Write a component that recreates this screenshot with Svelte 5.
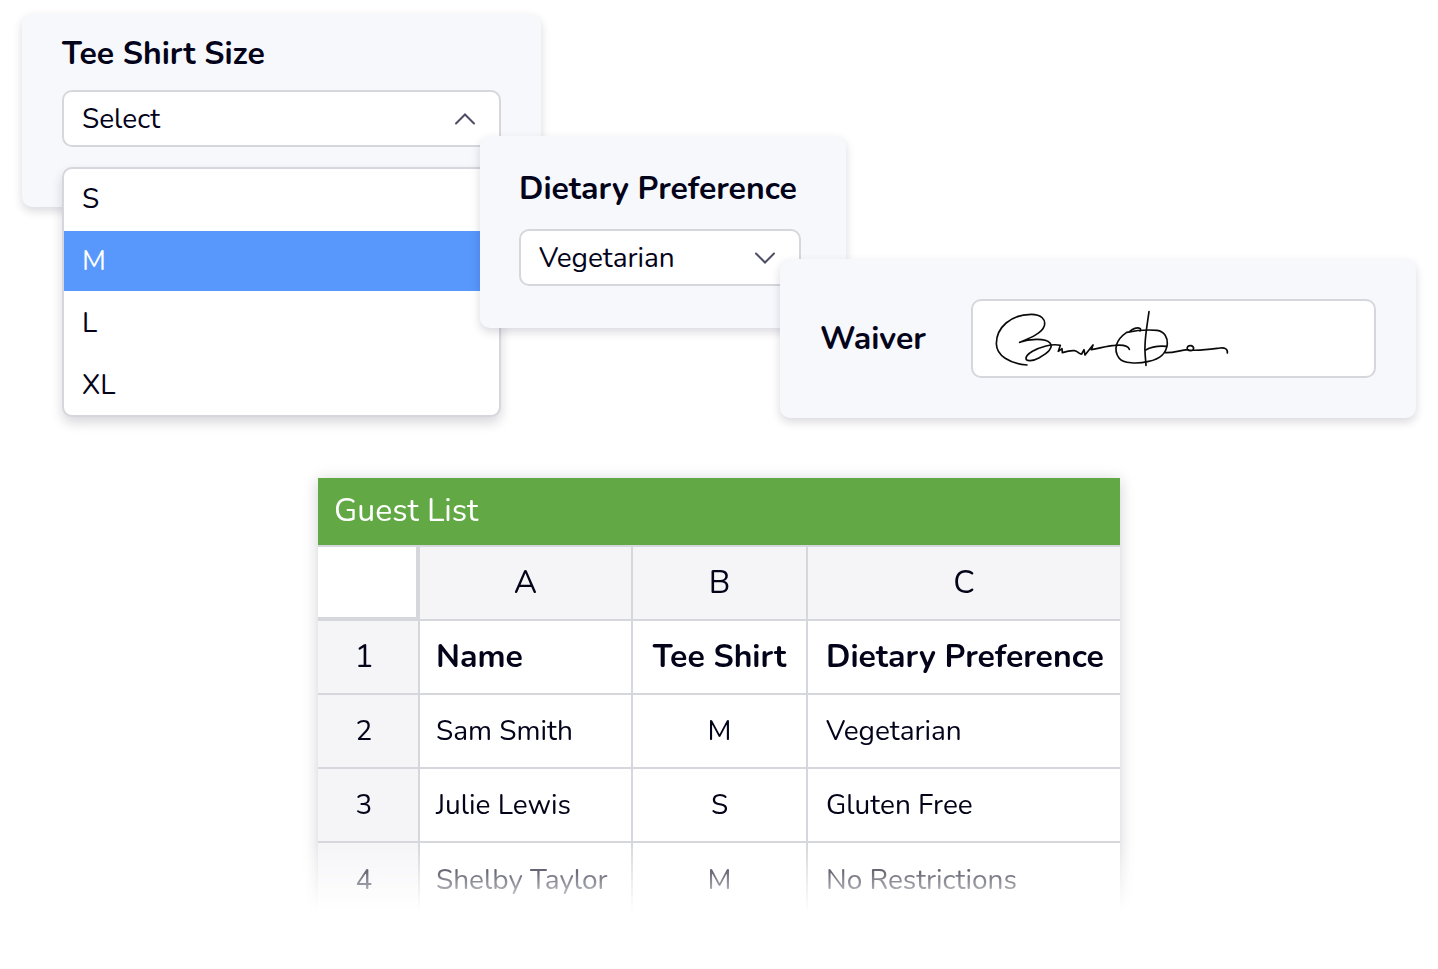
<script lang="ts">
	interface Guest {
		name: string;
		shirt: string;
		diet: string;
	}

	const sizes = ['S', 'M', 'L', 'XL'];
	const diets = ['Vegetarian', 'Gluten Free', 'No Restrictions'];
	const columns = ['A', 'B', 'C'];

	const guests: Guest[] = [
		{ name: 'Sam Smith', shirt: 'M', diet: 'Vegetarian' },
		{ name: 'Julie Lewis', shirt: 'S', diet: 'Gluten Free' },
		{ name: 'Shelby Taylor', shirt: 'M', diet: 'No Restrictions' }
	];

	let size = '';
	let active = 'M';
	let diet = 'Vegetarian';
	let open = true;

	function toggleMenu() {
		open = !open;
	}

	function pickSize(value: string) {
		size = value;
		active = value;
		open = false;
	}
</script>

<main class="page">
	<section class="cards">
		<div class="card size-card">
			<label class="label" for="size">Tee Shirt Size</label>
			<div class="field">
				<select id="size" class="select" bind:value={size} on:mousedown|preventDefault={toggleMenu}>
					<option value="">Select</option>
					{#each sizes as item}
						<option value={item}>{item}</option>
					{/each}
				</select>
				<svg class="chevron" class:up={open} viewBox="0 0 24 14" aria-hidden="true">
					<path d="M3 2.5 L12 11.5 L21 2.5" />
				</svg>
				{#if open}
					<div class="menu">
						{#each sizes as item}
							<button
								type="button"
								class="option"
								class:active={item === active}
								on:mouseenter={() => (active = item)}
								on:click={() => pickSize(item)}
							>{item}</button>
						{/each}
					</div>
				{/if}
			</div>
		</div>

		<div class="card diet-card">
			<label class="label" for="diet">Dietary Preference</label>
			<div class="field">
				<select id="diet" class="select" bind:value={diet}>
					{#each diets as item}
						<option value={item}>{item}</option>
					{/each}
				</select>
				<svg class="chevron" viewBox="0 0 24 14" aria-hidden="true">
					<path d="M3 2.5 L12 11.5 L21 2.5" />
				</svg>
			</div>
		</div>

		<div class="card waiver-card">
			<span class="label">Waiver</span>
			<div class="signature">
				<svg viewBox="60 50 729 189" role="img" aria-label="Signature">
					<path d="M171 224 C118 219 80 196 79 160 C79 112 122 72 184 72 C214 72 228 88 223 106 C216 129 180 143 149 156 C176 146 226 142 240 158 C252 173 232 188 208 202 C188 213 169 214 168 205 C168 190 200 174 228 167 C244 163 258 162 271 165 L265 183 L276 175 L277 187 C290 183 302 180 313 181 C324 182 329 193 335 191 L342 178 L345 194 L369 164 L364 178 C388 175 409 166 434 165 C455 163 475 166 478 177" />
					<path d="M479 124 C487 115 502 110 509 114 C513 116 512 120 510 122" />
					<path d="M470 126 C500 120 535 118 561 120 C584 123 593 143 592 161 C589 190 567 207 536 213 C503 221 459 220 447 203 C429 177 438 148 470 126 Z" />
					<path d="M537 64 C532 101 526 130 525 166 C524 188 527 207 528 225" />
					<path d="M527 179 C546 168 566 166 590 168" />
					<path d="M586 187 C612 188 629 180 653 178 C648 170 655 165 663 166 C674 169 673 181 662 181 C653 181 650 175 657 179 C692 182 721 177 750 173 C763 171 774 175 772 188" />
				</svg>
			</div>
		</div>
	</section>

	<div class="fade">
		<div class="sheet">
			<table>
				<caption>Guest List</caption>
				<colgroup>
					<col class="col-index" />
					<col class="col-name" />
					<col class="col-shirt" />
					<col />
				</colgroup>
				<thead>
					<tr>
						<td class="corner"></td>
						{#each columns as column}
							<th scope="col">{column}</th>
						{/each}
					</tr>
				</thead>
				<tbody>
					<tr class="titles">
						<th scope="row">1</th>
						<td>Name</td>
						<td class="center">Tee Shirt</td>
						<td>Dietary Preference</td>
					</tr>
					{#each guests as guest, i}
						<tr>
							<th scope="row">{i + 2}</th>
							<td>{guest.name}</td>
							<td class="center">{guest.shirt}</td>
							<td>{guest.diet}</td>
						</tr>
					{/each}
				</tbody>
			</table>
		</div>
	</div>
</main>

<style>
	:global(body) {
		background: #ffffff;
	}

	.page {
		box-sizing: border-box;
		padding: 14px 22px 54px;
		font-family: Nunito, Lato, sans-serif;
		font-size: 28px;
		line-height: 36px;
		color: #03031a;
	}

	.cards {
		display: flex;
		align-items: flex-start;
	}

	.card {
		position: relative;
		box-sizing: border-box;
		border-radius: 10px;
		background: #f6f8fc;
		box-shadow: 0 4px 10px rgba(20, 20, 50, 0.16);
	}

	.size-card {
		flex: 0 1 519px;
		padding: 20px 40px 60px;
	}

	.diet-card {
		flex: 0 1 366px;
		margin: 122px 0 0 -61px;
		padding: 33px 45px 42px 39px;
	}

	.waiver-card {
		flex: 1 1 0;
		display: flex;
		align-items: center;
		gap: 45px;
		margin: 245px 0 0 -66px;
		padding: 40px;
	}

	.label {
		display: block;
		font-size: 32px;
		line-height: 40px;
		font-weight: 700;
		white-space: nowrap;
	}

	.field {
		position: relative;
		margin-top: 16px;
	}

	.diet-card .field {
		margin-top: 20px;
	}

	.select {
		display: block;
		box-sizing: border-box;
		width: 100%;
		height: 57px;
		padding: 0 56px 0 18px;
		border: 2px solid #d6d7dc;
		border-radius: 10px;
		background: #ffffff;
		color: inherit;
		font: inherit;
		appearance: none;
	}

	.chevron {
		position: absolute;
		top: 22px;
		right: 24px;
		width: 24px;
		height: 14px;
		fill: none;
		stroke: #4d4d66;
		stroke-width: 2;
		stroke-linecap: round;
		pointer-events: none;
	}

	.chevron.up {
		transform: rotate(180deg);
	}

	.menu {
		position: absolute;
		top: 77px;
		left: 0;
		right: 0;
		display: flex;
		flex-direction: column;
		gap: 2px;
		border: 2px solid #d6d7dc;
		border-radius: 10px;
		background: #ffffff;
		box-shadow: 0 6px 12px rgba(20, 20, 50, 0.16);
		overflow: hidden;
	}

	.option {
		width: 100%;
		height: 60px;
		padding: 0 18px;
		border: none;
		background: none;
		color: inherit;
		font: inherit;
		text-align: left;
	}

	.option.active {
		background: #5897fc;
		color: #ffffff;
	}

	.signature {
		flex: 1;
		display: flex;
		align-items: center;
		box-sizing: border-box;
		height: 79px;
		padding: 0 17px;
		border: 2px solid #d6d7dc;
		border-radius: 10px;
		background: #ffffff;
	}

	.signature svg {
		width: 243px;
		height: 63px;
		fill: none;
		stroke: #0a0a0a;
		stroke-width: 5;
		stroke-linecap: round;
		stroke-linejoin: round;
	}

	.fade {
		padding: 24px 24px 0;
		margin-top: 36px;
		mask-image: linear-gradient(to top, transparent 4px, #000000 74px);
	}

	.sheet {
		max-width: 802px;
		margin: 0 auto;
		box-shadow: 0 2px 14px rgba(20, 20, 50, 0.2);
	}

	table {
		width: 100%;
		table-layout: fixed;
		border-collapse: separate;
		border-spacing: 0;
		background: #ffffff;
	}

	caption {
		box-sizing: border-box;
		height: 67px;
		padding: 13px 16px;
		background: #62a844;
		color: #ffffff;
		font-size: 32px;
		line-height: 40px;
		text-align: left;
	}

	.col-index {
		width: 102px;
	}

	.col-name {
		width: 213px;
	}

	.col-shirt {
		width: 175px;
	}

	th,
	td {
		box-sizing: border-box;
		height: 74px;
		padding: 0 16px;
		border-right: 2px solid #d6d7dc;
		border-bottom: 2px solid #d6d7dc;
		text-align: left;
		white-space: nowrap;
	}

	td:last-child {
		padding: 0 0 0 18px;
	}

	th:last-child,
	td:last-child {
		border-right: none;
	}

	th {
		padding: 0 8px 0 0;
		background: #f5f5f8;
		font-weight: 400;
		text-align: center;
	}

	thead th {
		padding: 0;
		font-size: 32px;
	}

	thead th,
	.corner {
		height: 76px;
		border-top: 2px solid #d6d7dc;
	}

	.corner {
		border-right-width: 4px;
		border-bottom-width: 4px;
	}

	td.center {
		padding: 0;
		text-align: center;
	}

	.titles {
		font-size: 32px;
		font-weight: 700;
	}

	tbody tr:last-child > * {
		border-bottom: none;
	}

	@media (max-width: 1100px) {
		.cards {
			flex-direction: column;
			gap: 24px;
		}

		.card {
			flex: none;
			margin: 0;
			width: 100%;
		}

		.size-card {
			padding-bottom: 340px;
		}

		.sheet {
			overflow-x: auto;
		}
	}
</style>
